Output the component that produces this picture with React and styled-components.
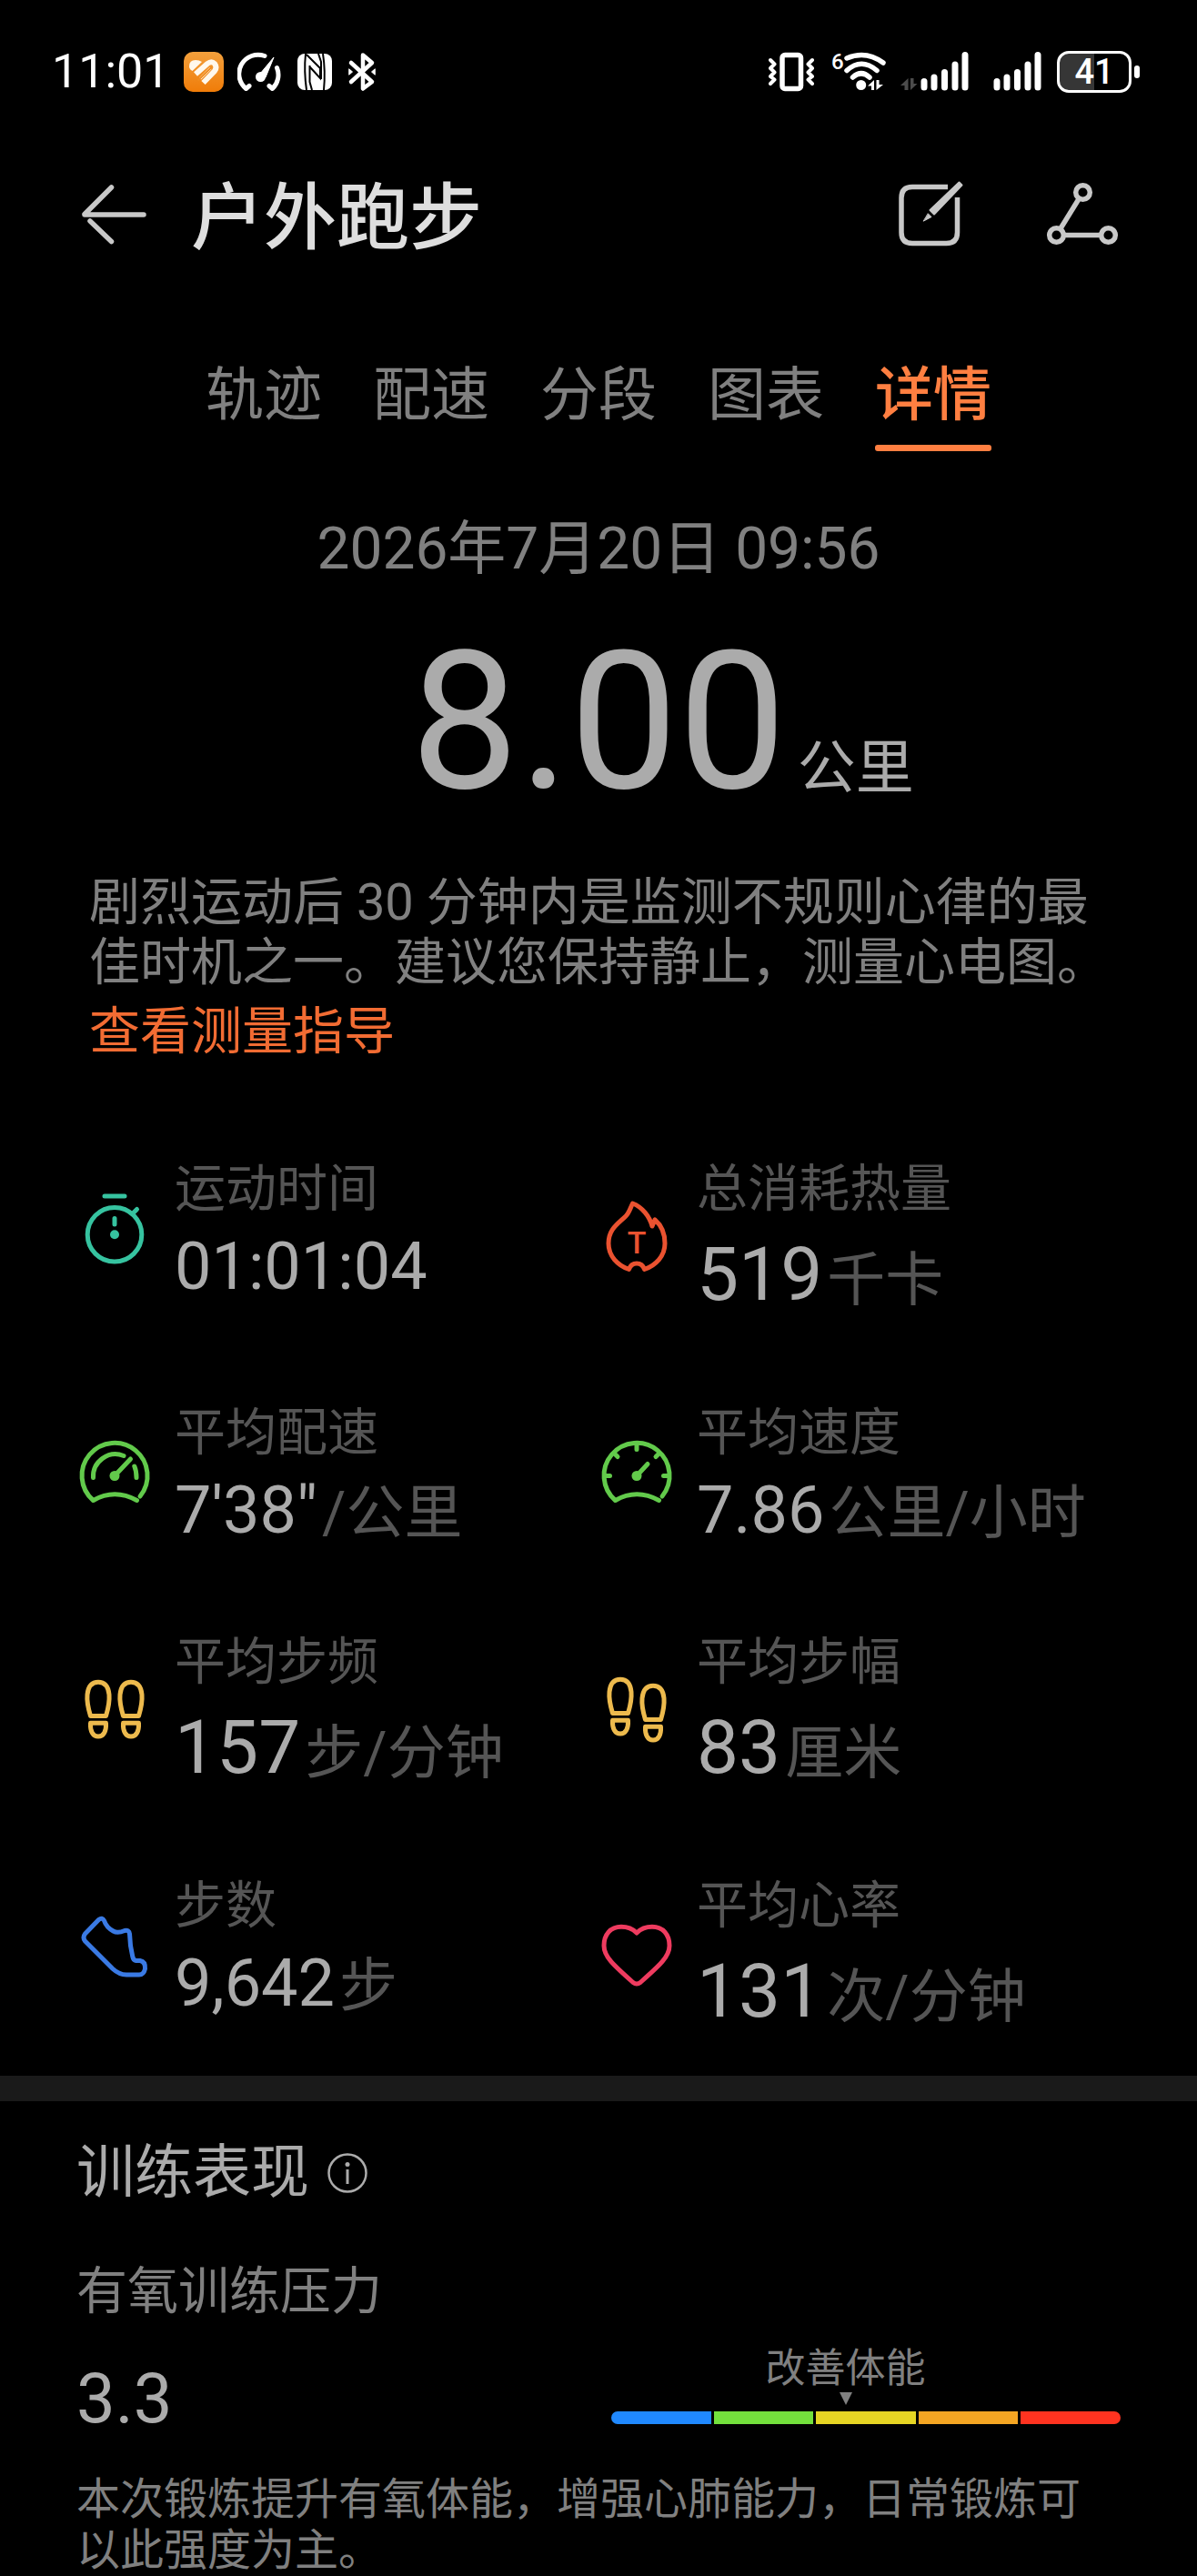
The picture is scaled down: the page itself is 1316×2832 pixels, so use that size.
import React from "react";
import styled, { createGlobalStyle } from "styled-components";

const tabs = ["轨迹", "配速", "分段", "图表", "详情"];

const stats = [
  { icon: "stopwatch", color: "#36c3a0", label: "运动时间", value: "01:01:04" },
  { icon: "flame", color: "#ea5230", label: "总消耗热量", value: "519", unit: "千卡", big: true },
  { icon: "pace", color: "#62ca4b", label: "平均配速", value: "7'38\"", unit: "/公里" },
  { icon: "speed", color: "#62ca4b", label: "平均速度", value: "7.86", unit: "公里/小时" },
  { icon: "cadence", color: "#edba4d", label: "平均步频", value: "157", unit: "步/分钟", big: true },
  { icon: "stride", color: "#edba4d", label: "平均步幅", value: "83", unit: "厘米", big: true },
  { icon: "shoe", color: "#3a7ae4", label: "步数", value: "9,642", unit: "步" },
  { icon: "heart", color: "#ee3b5f", label: "平均心率", value: "131", unit: "次/分钟", big: true },
];

const zones = ["#2089ff", "#74e13d", "#e6d524", "#f5a623", "#ff3320"];

const stress = 3.3;

function Foot({ x = 0, y = 0 }) {
  return (
    <g transform={`translate(${x} ${y})`}>
      <path d="M21.5 51.5C18 40 17.5 33 18 28C19 18.5 23 14.3 30 14.3S41 18.5 42 28C42.4 33 42 40 38.5 51.5Z" />
      <path d="M21.5 59.3H38.5C39 68 36 74 30 74S21 68 21.5 59.3Z" />
    </g>
  );
}

const dial = "M76 70A36 36 0 1 0 24.5 74.5Q48 61 72.5 74.5";

const drawings = {
  stopwatch: (
    <>
      <path d="M37 8H59M48 32.5V39M68 27L72.5 22.5" />
      <circle cx="48" cy="50.3" r="29.8" />
      <circle cx="48" cy="50.3" r="5" fill="currentColor" stroke="none" />
    </>
  ),
  flame: (
    <>
      <path d="M43.5 8C41 13 40 18 36 22C28 30 17 36 17 52C17 66 27 76 39.5 80.5C41 76 44 74 48 74S55 76 56.5 80.5C69 76 79 66 79 52C79 42 75 32 68 26L65 33C62 22 54 12 43.5 8Z" />
      <text x="48" y="63" fontSize="34" fontWeight="500" textAnchor="middle" fill="currentColor" stroke="none">T</text>
    </>
  ),
  pace: (
    <>
      <path d={dial} />
      <path d="M24.5 49.5A24.5 24.5 0 0 1 58 25.5M69.8 37Q72 42 72 49.5M48 47.5L65.5 29" />
      <circle cx="48" cy="47.5" r="5.5" fill="currentColor" stroke="none" />
    </>
  ),
  speed: (
    <>
      <path d={dial} />
      <path d="M48 13V18.5M13 47.5H18.5M83 47.5H77.5M23 22.5L27 26.5M73 22.5L69 26.5M48 47.5L60 34.5" />
      <circle cx="48" cy="47.5" r="5.5" fill="currentColor" stroke="none" />
    </>
  ),
  cadence: (
    <>
      <Foot />
      <Foot x={36} />
    </>
  ),
  stride: (
    <>
      <Foot y={-3} />
      <Foot x={36} y={4} />
    </>
  ),
  shoe: (
    <path d="M30.5 15.5L15.5 31Q12.5 35 15.5 39L46 69.5Q53 76 61 76H75Q80 76 81.5 69.5Q82 61.5 76 60.5H71.5Q68.5 60 67.8 56L65.5 44L64.5 31Q64 26.5 59 27.5C53 30 50 30 46.5 28C41 25 38 21 36.5 16.5Q34.5 12.5 30.5 15.5Z" />
  ),
  heart: (
    <path d="M48 22C43 17 37 15.3 31 15.3C19 15.3 12 24 12 36C12 48 22 57 44 76.5Q48 79.5 52 76.5C74 57 84 48 84 36C84 24 77 15.3 65 15.3C59 15.3 53 17 48 22Z" />
  ),
};

function Signal({ viewBox, width, data }) {
  return (
    <svg width={width} height="50" viewBox={viewBox} fill="none" stroke="#fff" strokeWidth="7" strokeLinecap="round">
      {data && (
        <path d="M8.5 32L0 40H4.5V45H8.5ZM11 32V45L18.5 38H14.5V32Z" fill="#4c4c4c" stroke="none" />
      )}
      <path d="M26 35.5V42M37 31V42M48.5 25.5V42M60 17V42M71 6.5V42" />
    </svg>
  );
}

function StatusBar() {
  return (
    <Status>
      <StatusGroup>
        <Clock>11:01</Clock>
        <svg width="44" height="50" viewBox="0 0 44 50" fill="none">
          <defs>
            <linearGradient id="badge" x1="0" y1="0" x2="0" y2="1">
              <stop offset="0" stopColor="#f3a03c" />
              <stop offset="1" stopColor="#f07c08" />
            </linearGradient>
          </defs>
          <rect y="3" width="44" height="44" rx="10" fill="url(#badge)" />
          <path d="M6 19Q6 12 13 12Q17 12 20 14L9.5 24Q6 22 6 19Z" fill="#fff8ec" />
          <path d="M13 27.5L26 16Q30.5 12.5 34 16Q37 20 34 24L21.5 37" stroke="#fff8ec" strokeWidth="6" />
          <path d="M18 32.5L29.5 21" stroke="#fff8ec" strokeWidth="3" />
          <path d="M15.5 34.5L30 20.5" stroke="#f08c1e" strokeWidth="2" />
        </svg>
        <svg width="50" height="50" viewBox="0 0 50 50" fill="none" stroke="#fff" strokeWidth="5" strokeLinecap="round" strokeLinejoin="round">
          <path d="M13 40.5L9.5 43.5A21 21 0 0 1 30 7.5M43.5 20.5A21 21 0 0 1 38.5 43.5L35 40.5" />
          <path d="M25 27L40 9L31 31Z" fill="#fff" strokeWidth="1" />
          <circle cx="25.5" cy="30.5" r="5.5" fill="#fff" stroke="none" />
        </svg>
        <svg width="40" height="50" viewBox="0 0 40 50" fill="none">
          <rect x="1" y="5" width="38" height="40" rx="8" fill="#fff" />
          <path d="M10 5Q8 24 11 45M14.5 18V36L17 45M11 6L26 21V32L15 20M27 33V14L24 5M29 5Q32 24 30 45" stroke="#000" strokeWidth="2" />
        </svg>
        <svg width="34" height="50" viewBox="0 0 34 50" fill="none" stroke="#fff" strokeWidth="4.5" strokeLinecap="round" strokeLinejoin="round">
          <path d="M5 15L28 36L18 43.5V6.5L28 15L5 36" />
          <path d="M3 22L6.5 25L3 28ZM31 22L27.5 25L31 28Z" fill="#fff" strokeWidth="1" />
        </svg>
      </StatusGroup>
      <StatusGroup $wide>
        <svg width="51" height="50" viewBox="2 0 51 50" fill="none" stroke="#fff" strokeWidth="5" strokeLinecap="round" strokeLinejoin="round">
          <rect x="17" y="6.5" width="20.5" height="37" rx="3" strokeWidth="5.5" />
          <path d="M4 12L8.5 16.5L4 21L8.5 25.5L4 30L8.5 33.5L4 38M50 12L45.5 16.5L50 21L45.5 25.5L50 30L45.5 33.5L50 38" strokeWidth="4" />
        </svg>
        <svg width="62" height="62" viewBox="-2 -6 62 62" fill="none" stroke="#fff" strokeWidth="5.5" strokeLinecap="round">
          <text x="0" y="22" fontSize="24" fontWeight="500" fill="#fff" stroke="none">6</text>
          <path d="M17 10Q38 1 57 15M17 23.5Q33 9 50 23.5M23.5 31Q33 22.5 42 31" />
          <circle cx="32.7" cy="39.5" r="5.5" fill="#fff" stroke="none" />
          <path d="M47 34L40 40.5H44V45H47ZM49.5 34V45L57 39H52.5V34Z" fill="#fff" stroke="none" />
        </svg>
        <Signal width="76" viewBox="0 0 76 50" data />
        <Signal width="64" viewBox="12 0 64 50" />
        <BatteryWrap>
          <Battery>41</Battery>
        </BatteryWrap>
      </StatusGroup>
    </Status>
  );
}

function Stat({ icon, color, label, value, unit, big }) {
  return (
    <StatItem>
      <StatIcon viewBox="0 0 96 96" $color={color} aria-hidden="true">
        {drawings[icon]}
      </StatIcon>
      <div>
        <StatLabel>{label}</StatLabel>
        <StatValue $big={big}>
          {value}
          {unit && <Unit>{unit}</Unit>}
        </StatValue>
      </div>
    </StatItem>
  );
}

export default function App() {
  return (
    <Page lang="zh-CN">
      <GlobalStyle />
      <StatusBar />

      <Header>
        <IconButton aria-label="返回">
          <svg viewBox="0 0 96 96">
            <path d="M44.5 14L15 43.5M15 44H80M21 51L44.5 73.5" />
          </svg>
        </IconButton>
        <Title>户外跑步</Title>
        <Actions>
          <IconButton aria-label="编辑">
            <svg viewBox="0 0 96 96">
              <path d="M66 13.5H27Q15 13.5 15 25.5V63.5Q15 75.5 27 75.5H64.5Q76.5 75.5 76.5 63.5V25" strokeLinecap="butt" />
              <path d="M78.5 8.5L81.5 11.5L51 43.5L46.500 39Z" fill="currentColor" strokeWidth="2" strokeLinejoin="round" />
              <path d="M44.5 43L48 46.5L39.5 51Z" fill="currentColor" strokeWidth="1" />
            </svg>
          </IconButton>
          <IconButton aria-label="分享">
            <svg viewBox="0 0 96 96">
              <circle cx="48.5" cy="19.5" r="7.8" />
              <circle cx="19.5" cy="66.5" r="7.8" />
              <circle cx="76.5" cy="66.5" r="7.8" />
              <path d="M44.5 26L23.5 60M27.5 66.5H68.5" strokeLinecap="butt" />
            </svg>
          </IconButton>
        </Actions>
      </Header>

      <Tabs>
        {tabs.map((tab) => (
          <Tab key={tab} href="#" $active={tab === "详情"}>{tab}</Tab>
        ))}
      </Tabs>

      <DateText>2026年7月20日 09:56</DateText>
      <Distance>
        <DistanceValue>8.00</DistanceValue>
        <DistanceUnit>公里</DistanceUnit>
      </Distance>

      <Tip>
        剧烈运动后 30 分钟内是监测不规则心律的最佳时机之一。建议您保持静止，测量心电图。
        <TipLink href="#">查看测量指导</TipLink>
      </Tip>

      <StatGrid>
        {stats.map((item) => (
          <Stat key={item.label} {...item} />
        ))}
      </StatGrid>

      <Divider />

      <Training>
        <TrainingHead>
          <TrainingTitle>训练表现</TrainingTitle>
          <InfoButton aria-label="说明">
            <svg width="44" height="44" viewBox="0 0 44 44" fill="none" stroke="currentColor" strokeWidth="2.5">
              <circle cx="22" cy="22" r="20.5" />
              <path d="M22 18V34" strokeWidth="3" />
              <circle cx="22" cy="12.5" r="2.5" fill="currentColor" stroke="none" />
            </svg>
          </InfoButton>
        </TrainingHead>
        <SubTitle>有氧训练压力</SubTitle>
        <StressRow>
          <StressValue>{stress.toFixed(1)}</StressValue>
          <Scale>
            <Marker style={{ marginLeft: `${((stress - 1) / 5) * 100}%` }}>
              改善体能
              <svg width="14" height="14" viewBox="0 0 14 14">
                <path d="M0 0H14L7 14Z" fill="#808080" />
              </svg>
            </Marker>
            <Bar>
              {zones.map((zone) => (
                <Zone key={zone} $color={zone} />
              ))}
            </Bar>
          </Scale>
        </StressRow>
        <Advice>本次锻炼提升有氧体能，增强心肺能力，日常锻炼可以此强度为主。</Advice>
      </Training>
    </Page>
  );
}

const GlobalStyle = createGlobalStyle`
  * {
    box-sizing: border-box;
  }

  body {
    margin: 0;
    background: #000;
    font-family: Roboto, "Noto Sans CJK SC", sans-serif;
  }

  h1, h2, h3, p, dl {
    margin: 0;
    font-weight: 400;
  }

  button {
    padding: 0;
    border: 0;
    background: none;
    color: inherit;
  }

  a {
    text-decoration: none;
  }

  svg {
    display: block;
    flex: none;
  }
`

const Page = styled.main`
  min-height: 100vh;
  background: #000;
  color: #ababab;
`

const Status = styled.div`
  display: flex;
  justify-content: space-between;
  align-items: center;
  padding: 44px 63px 0 57px;
  color: #fff;
`

const StatusGroup = styled.div`
  display: flex;
  align-items: center;
  gap: ${({ $wide }) => ($wide ? "16px" : "15px")};
  height: 70px;
`

const Clock = styled.span`
  font-size: 52px;
  line-height: 70px;
`

const BatteryWrap = styled.span`
  display: flex;
  align-items: center;
  gap: 3px;

  &::after {
    content: "";
    width: 6px;
    height: 14px;
    border-radius: 3px;
    background: #fff;
  }
`

const Battery = styled.span`
  width: 82px;
  height: 46px;
  border: 3px solid #fff;
  border-radius: 13px;
  background: linear-gradient(to right, #363636 50%, #000 50%);
  font-size: 38px;
  font-weight: 500;
  line-height: 40px;
  text-align: center;
`

const Header = styled.header`
  display: flex;
  align-items: center;
  gap: 36px;
  padding: 78px 78px 0;
  color: #c8c8c8;
`

const IconButton = styled.button`
  width: 96px;
  height: 96px;

  svg {
    width: 96px;
    height: 96px;
    fill: none;
    stroke: currentColor;
    stroke-width: 5.5px;
    stroke-linecap: round;
  }
`

const Title = styled.h1`
  flex: 1;
  color: #dedede;
  font-size: 80px;
  font-weight: 500;
  line-height: 96px;
`

const Actions = styled.div`
  display: flex;
  gap: 70px;
`

const Tabs = styled.nav`
  display: flex;
  justify-content: center;
  gap: 56px;
  margin-top: 105px;
`

const Tab = styled.a`
  color: ${({ $active }) => ($active ? "#ff7f41" : "#808080")};
  font-size: 64px;
  font-weight: ${({ $active }) => ($active ? 500 : 400)};
  line-height: 84px;

  &::after {
    content: "";
    display: block;
    height: 7px;
    margin-top: 12px;
    border-radius: 3px;
    background: ${({ $active }) => ($active ? "#ff7f41" : "transparent")};
  }
`

const DateText = styled.p`
  margin-top: 66px;
  color: #808080;
  font-size: 64px;
  line-height: 84px;
  text-align: center;
`

const Distance = styled.div`
  display: grid;
  grid-template-columns: 1fr auto 1fr;
  align-items: baseline;
  margin-top: 40px;
`

const DistanceValue = styled.strong`
  grid-column: 2;
  font-size: 212px;
  font-weight: 400;
  line-height: 216px;
`

const DistanceUnit = styled.span`
  padding-left: 12px;
  font-size: 64px;
`

const Tip = styled.p`
  margin-top: 57px;
  padding: 0 98px;
  color: #808080;
  font-size: 56px;
  line-height: 66px;
`

const TipLink = styled.a`
  display: block;
  width: max-content;
  margin-top: 10px;
  color: #f26c33;
`

const StatGrid = styled.dl`
  display: grid;
  grid-template-columns: 1fr 1fr;
  align-items: start;
  row-gap: 90px;
  margin-top: 107px;
  padding: 0 90px 0 78px;
`

const StatItem = styled.div`
  display: flex;
  align-items: center;
  gap: 18px;
`

const StatIcon = styled.svg`
  width: 96px;
  height: 96px;
  color: ${({ $color }) => $color};
  fill: none;
  stroke: currentColor;
  stroke-width: 5px;
  stroke-linecap: round;
  stroke-linejoin: round;
`

const StatLabel = styled.dt`
  color: #555;
  font-size: 56px;
  line-height: 66px;
`

const StatValue = styled.dd`
  margin: 10px 0 0;
  font-size: ${({ $big }) => ($big ? "82px" : "72px")};
  line-height: ${({ $big }) => ($big ? "102px" : "86px")};
  white-space: nowrap;
`

const Unit = styled.span`
  margin-left: 5px;
  color: #555;
  font-size: 64px;
  line-height: 64px;
`

const Divider = styled.div`
  height: 28px;
  margin-top: 42px;
  background: #1a1a1a;
`

const Training = styled.section`
  padding: 37px 84px 0;
`

const TrainingHead = styled.div`
  display: flex;
  align-items: center;
  gap: 20px;
`

const TrainingTitle = styled.h2`
  font-size: 64px;
  line-height: 84px;
`

const InfoButton = styled.button`
  width: 44px;
  height: 44px;
`

const SubTitle = styled.h3`
  margin-top: 55px;
  color: #808080;
  font-size: 56px;
  line-height: 66px;
`

const StressRow = styled.div`
  display: flex;
  justify-content: space-between;
  align-items: flex-end;
  gap: 28px;
  margin-top: 26px;
`

const StressValue = styled.strong`
  flex: 1;
  font-size: 76px;
  font-weight: 400;
  line-height: 86px;
`

const Scale = styled.div`
  width: calc(50% - 14px);
  padding-bottom: 15px;
`

const Marker = styled.div`
  display: flex;
  flex-direction: column;
  align-items: center;
  width: max-content;
  transform: translateX(-50%);
  color: #808080;
  font-size: 44px;
  line-height: 52px;
`

const Bar = styled.div`
  display: flex;
  gap: 3px;
  height: 14px;
  margin-top: 7px;
  border-radius: 7px;
  overflow: hidden;
`

const Zone = styled.span`
  flex: 1;
  background: ${({ $color }) => $color};
`

const Advice = styled.p`
  margin-top: 40px;
  color: #808080;
  font-size: 48px;
  line-height: 56px;
`
